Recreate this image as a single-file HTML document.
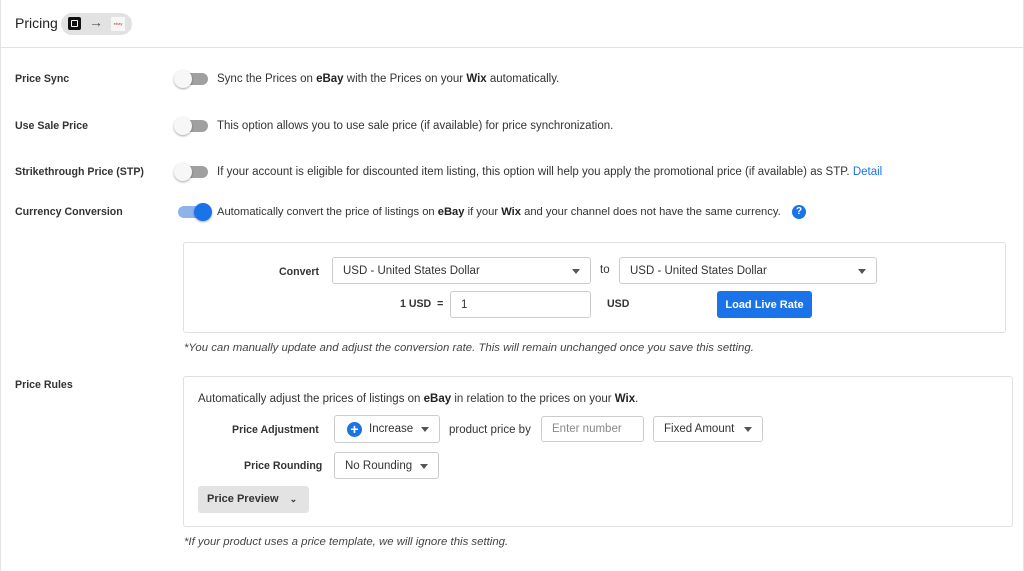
<!DOCTYPE html>
<html><head><style>
*{box-sizing:border-box;margin:0;padding:0}
body{width:1024px;height:571px;background:#fff;font-family:"Liberation Sans",sans-serif;font-size:11.5px;color:#333;position:relative;overflow:hidden}
.card{position:absolute;left:0;top:0;width:1024px;height:571px;border-left:1px solid #e3e3e3;border-right:1px solid #e3e3e3}
.hdr{position:absolute;left:0;top:0;width:1024px;height:48px;border-bottom:1px solid #e3e3e3}
.abs{position:absolute;white-space:nowrap}
.lbl{font-weight:bold;color:#333;font-size:10.6px}
.tog{position:absolute;width:32px;height:12px;border-radius:6px;background:#a0a0a0}
.tog::after{content:"";position:absolute;left:-2px;top:-3px;width:18px;height:18px;border-radius:50%;background:#f7f7f7;box-shadow:0 1px 2px rgba(0,0,0,.35)}
.tog.on{background:#8db3ea}.tog.on::after{left:16px;background:#1a73e8}
.box{position:absolute;border:1px solid #e0e0e0;border-radius:3px}
.sel{position:absolute;border:1px solid #ccc;border-radius:3px;background:#fff;font-size:11.5px;color:#333;padding-left:10px;display:flex;align-items:center}
.caret{position:absolute;right:10px;top:50%;margin-top:-2px;width:0;height:0;border-left:4px solid transparent;border-right:4px solid transparent;border-top:5px solid #555}
b{font-weight:bold;color:#222}
</style></head><body>
<div class="card"></div>
<div class="hdr"></div>
<div class="abs" style="left:15px;top:15px;font-size:14px;color:#222">Pricing</div>
<div class="abs" style="left:61px;top:13px;width:71px;height:22px;border-radius:11px;background:#e2e2e2"></div>
<div class="abs" style="left:68px;top:17px;width:13px;height:13px;border-radius:2px;background:#111"><div style="position:absolute;left:3px;top:3px;width:7px;height:7px;border:1.5px solid #fff;border-radius:1px"></div></div>
<div class="abs" style="left:89px;top:14px;font-size:14px;color:#555">→</div>
<div class="abs" style="left:111px;top:17px;width:14px;height:14px;background:#f6f6f6;font-size:4px;color:#c33;line-height:14px;text-align:center">ebay</div>

<div class="abs lbl" style="left:15px;top:73px">Price Sync</div>
<div class="tog" style="left:176px;top:73px"></div>
<div class="abs" style="left:217px;top:73px">Sync the Prices on <b>eBay</b> with the Prices on your <b>Wix</b> automatically.</div>

<div class="abs lbl" style="left:15px;top:120px">Use Sale Price</div>
<div class="tog" style="left:176px;top:120px"></div>
<div class="abs" style="left:217px;top:120px">This option allows you to use sale price (if available) for price synchronization.</div>

<div class="abs lbl" style="left:15px;top:166px">Strikethrough Price (STP)</div>
<div class="tog" style="left:176px;top:166px"></div>
<div class="abs" style="left:217px;top:166px">If your account is eligible for discounted item listing, this option will help you apply the promotional price (if available) as STP. <span style="color:#1a73e8">Detail</span></div>

<div class="abs lbl" style="left:15px;top:206px">Currency Conversion</div>
<div class="tog on" style="left:178px;top:206px"></div>
<div class="abs" style="left:217px;top:206px;font-size:11.2px">Automatically convert the price of listings on <b>eBay</b> if your <b>Wix</b> and your channel does not have the same currency.</div>
<div class="abs" style="left:792px;top:205px;width:14px;height:14px;border-radius:50%;background:#1a73e8;color:#fff;font-size:10px;font-weight:bold;text-align:center;line-height:14px">?</div>

<div class="box" style="left:183px;top:242px;width:823px;height:91px"></div>
<div class="abs lbl" style="left:279px;top:266px">Convert</div>
<div class="sel" style="left:332px;top:257px;width:259px;height:27px">USD - United States Dollar<span class="caret"></span></div>
<div class="abs" style="left:600px;top:264px">to</div>
<div class="sel" style="left:619px;top:257px;width:258px;height:27px">USD - United States Dollar<span class="caret"></span></div>
<div class="abs lbl" style="left:400px;top:298px">1 USD &nbsp;=</div>
<div class="sel" style="left:450px;top:291px;width:141px;height:27px">1</div>
<div class="abs lbl" style="left:607px;top:298px">USD</div>
<div class="abs" style="left:717px;top:291px;width:95px;height:27px;background:#1a73e8;color:#fff;border-radius:3px;font-weight:bold;font-size:11px;text-align:center;line-height:28px">Load Live Rate</div>
<div class="abs" style="left:184px;top:342px;font-style:italic;font-size:11.4px;color:#444">*You can manually update and adjust the conversion rate. This will remain unchanged once you save this setting.</div>

<div class="abs lbl" style="left:15px;top:379px">Price Rules</div>
<div class="box" style="left:183px;top:376px;width:830px;height:151px"></div>
<div class="abs" style="left:198px;top:393px">Automatically adjust the prices of listings on <b>eBay</b> in relation to the prices on your <b>Wix</b>.</div>
<div class="abs lbl" style="left:232px;top:424px">Price Adjustment</div>
<div class="sel" style="left:334px;top:415px;width:106px;height:28px;padding-left:12px"><span style="display:inline-block;width:15px;height:15px;border-radius:50%;background:#1a73e8;color:#fff;font-weight:bold;font-size:14px;line-height:15px;text-align:center;margin-right:7px">+</span>Increase<span class="caret"></span></div>
<div class="abs" style="left:449px;top:424px">product price by</div>
<div class="sel" style="left:541px;top:416px;width:103px;height:26px;color:#888">Enter number</div>
<div class="sel" style="left:653px;top:416px;width:110px;height:26px">Fixed Amount<span class="caret"></span></div>
<div class="abs lbl" style="left:244px;top:460px">Price Rounding</div>
<div class="sel" style="left:334px;top:452px;width:105px;height:27px">No Rounding<span class="caret"></span></div>
<div class="abs" style="left:198px;top:486px;width:111px;height:27px;background:#e3e3e3;border-radius:3px;font-weight:bold;font-size:11px;color:#333;padding-left:9px;line-height:27px">Price Preview <span style="margin-left:8px;font-size:9px">⌄</span></div>
<div class="abs" style="left:184px;top:536px;font-style:italic;font-size:11.4px;color:#444">*If your product uses a price template, we will ignore this setting.</div>
</body></html>
